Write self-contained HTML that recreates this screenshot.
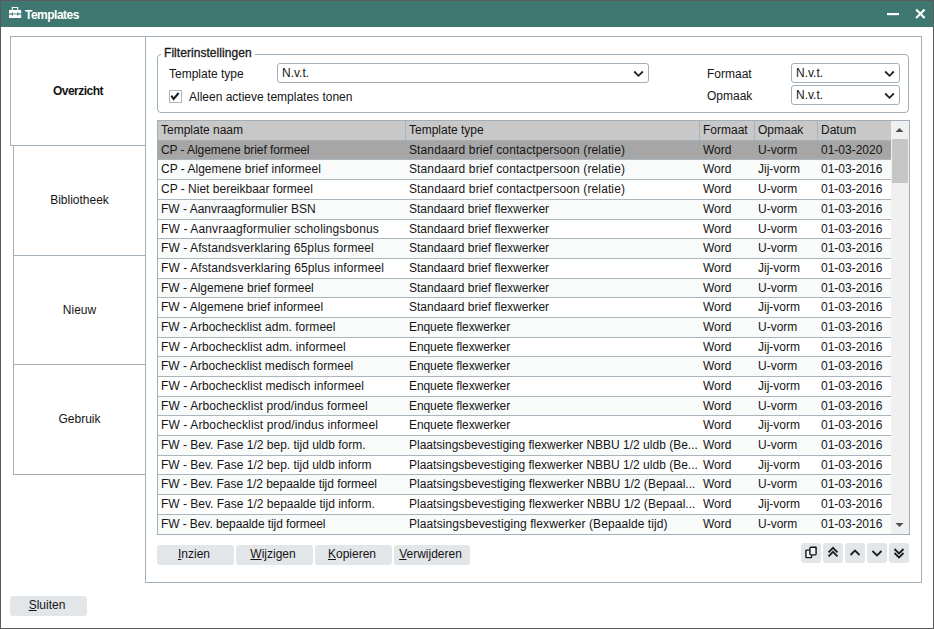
<!DOCTYPE html>
<html><head><meta charset="utf-8"><title>Templates</title>
<style>
*{box-sizing:border-box;margin:0;padding:0}
html,body{width:934px;height:629px;overflow:hidden;background:#fff}
body{position:relative;font-family:"Liberation Sans",sans-serif;font-size:12px;color:#151515}
.abs{position:absolute}
.win{position:absolute;left:0;top:0;width:934px;height:629px;border:1px solid #5a5a5a}
.title{position:absolute;left:1px;top:1px;width:932px;height:26px;background:#3e7670}
.ttext{position:absolute;left:25px;top:8px;line-height:14px;color:#fff;font-weight:bold;letter-spacing:-0.5px;font-size:12px}
.tab{position:absolute;border:1px solid #a3afb8;background:#fff;text-align:center;line-height:14px}
.panel{position:absolute;left:145px;top:36px;width:777px;height:547px;border:1px solid #a3afb8}
.fs{position:absolute;left:157px;top:54px;width:752px;height:59px;border:1px solid #a3afb8;border-radius:4px}
.legend{position:absolute;left:161px;top:46px;width:94px;height:14px;background:#fff;line-height:14px;padding-left:3px;-webkit-text-stroke:0.3px #1e1e1e;letter-spacing:0.05px}
.lbl{position:absolute;line-height:14px}
.sel-box{position:absolute;border:1px solid #a3afb8;border-radius:3px;background:#fff;line-height:19px;padding-left:4px}
.chev{position:absolute}
.cb{position:absolute;left:169px;top:90px;width:13px;height:13px;border:1px solid #b4b4b4;background:#fff}
.table{position:absolute;left:157px;top:120px;width:753px;height:415px;border:1px solid #a3afb8;overflow:hidden;background:#fff}
.hdr{position:absolute;left:0;top:0;width:733px;height:20px;background:#c8c8c8;border-bottom:1px solid #a3afb8}
.hdr span{position:absolute;top:0;line-height:19px;height:19px;padding-left:3px;border-left:1px solid #aab4bc}
.row{position:absolute;left:0;width:733px;border-bottom:1px solid #aab5bd;background:#fff}
.row.alt{background:#f9fbfb}
.row.sel{background:#a6a6a6}
.row span{position:absolute;top:0;line-height:19px;white-space:nowrap;overflow:hidden}
.c1{left:3px;width:244px}
.c2{left:251px;width:290px}
.c3{left:545px;width:52px}
.c4{left:600px;width:60px}
.c5{left:663px;width:70px}
.sb{position:absolute;left:733px;top:0;width:18px;height:413px;background:#f0f0f0}
.thumb{position:absolute;left:1px;top:18px;width:16px;height:44px;background:#c6c6c6}
.btn{position:absolute;height:20px;background:#e2e6e9;border-radius:3px;text-align:center;line-height:18px;padding-right:3px}
.ibtn{position:absolute;top:543px;width:20px;height:20px;background:#e2e6e9;border-radius:3px}
u{text-decoration:underline;text-decoration-thickness:1px;text-underline-offset:1px}
</style></head><body>
<div class="win"></div>
<div class="title">
  <svg class="abs" style="left:8px;top:6px" width="13" height="12" viewBox="0 0 13 12">
    <path d="M3.3 3.2 V0.5 H8.7 V3.2" fill="none" stroke="#fff" stroke-width="1.1"/>
    <rect x="0" y="3" width="12.2" height="3.2" fill="#fff"/>
    <rect x="0" y="6.2" width="12.2" height="1.8" fill="#fff" opacity="0.45"/>
    <rect x="0" y="8" width="12.2" height="3" fill="#fff"/>
    <path d="M4.2 6.6 Q6.1 7.6 8 6.6 V7.2 Q6.1 8 4.2 7.2 Z" fill="#fff"/>
    <ellipse cx="3.3" cy="6.9" rx="0.75" ry="1.7" fill="#3e7670"/>
    <ellipse cx="8.9" cy="6.9" rx="0.75" ry="1.7" fill="#3e7670"/>
  </svg>
</div>
<div class="ttext">Templates</div>
<svg class="abs" style="left:886px;top:12px" width="14" height="4"><rect x="1" y="1" width="12" height="2.2" fill="#fff"/></svg>
<svg class="abs" style="left:913px;top:7px" width="14" height="14" viewBox="0 0 14 14"><path d="M3.1 2.4 L11.6 10.9 M11.6 2.4 L3.1 10.9" stroke="#fff" stroke-width="2.1"/></svg>

<div class="panel"></div>
<div class="tab" style="left:13px;top:145px;width:133px;height:111px;padding-top:47px">Bibliotheek</div>
<div class="tab" style="left:13px;top:255px;width:133px;height:110px;padding-top:47px">Nieuw</div>
<div class="tab" style="left:13px;top:364px;width:133px;height:111px;padding-top:47px">Gebruik</div>
<div class="tab" style="left:10px;top:36px;width:136px;height:110px;padding-top:47px;font-weight:bold;letter-spacing:-0.5px">Overzicht</div>

<div class="fs"></div>
<div class="legend">Filterinstellingen</div>
<div class="lbl" style="left:169px;top:67px">Template type</div>
<div class="sel-box" style="left:277px;top:63px;width:372px;height:20px">N.v.t.</div>
<svg class="abs" style="left:633px;top:70px" width="11" height="8"><path d="M1.2 1.5 L5.5 5.8 L9.8 1.5" fill="none" stroke="#222" stroke-width="1.8"/></svg>
<div class="cb"></div>
<svg class="abs" style="left:170px;top:91px" width="11" height="11"><path d="M1.4 4.6 L3.6 8 L8.6 2" fill="none" stroke="#1e1e1e" stroke-width="2"/></svg>
<div class="lbl" style="left:189px;top:90px">Alleen actieve templates tonen</div>
<div class="lbl" style="left:707px;top:67px">Formaat</div>
<div class="lbl" style="left:707px;top:89px">Opmaak</div>
<div class="sel-box" style="left:791px;top:63px;width:109px;height:20px">N.v.t.</div>
<svg class="abs" style="left:884px;top:70px" width="11" height="8"><path d="M1.2 1.5 L5.5 5.8 L9.8 1.5" fill="none" stroke="#222" stroke-width="1.8"/></svg>
<div class="sel-box" style="left:791px;top:85px;width:109px;height:20px">N.v.t.</div>
<svg class="abs" style="left:884px;top:92px" width="11" height="8"><path d="M1.2 1.5 L5.5 5.8 L9.8 1.5" fill="none" stroke="#222" stroke-width="1.8"/></svg>

<div class="table">
  <div style="position:absolute;left:0;top:-121px;">
<div class="row sel" style="top:141px;height:19px"><span class="c1" style="letter-spacing:-0.077px">CP - Algemene brief formeel</span><span class="c2" style="letter-spacing:0.115px">Standaard brief contactpersoon (relatie)</span><span class="c3">Word</span><span class="c4">U-vorm</span><span class="c5">01-03-2020</span></div>
<div class="row alt" style="top:160px;height:20px"><span class="c1">CP - Algemene brief informeel</span><span class="c2" style="letter-spacing:0.115px">Standaard brief contactpersoon (relatie)</span><span class="c3">Word</span><span class="c4">Jij-vorm</span><span class="c5">01-03-2016</span></div>
<div class="row" style="top:180px;height:20px"><span class="c1">CP - Niet bereikbaar formeel</span><span class="c2" style="letter-spacing:0.115px">Standaard brief contactpersoon (relatie)</span><span class="c3">Word</span><span class="c4">U-vorm</span><span class="c5">01-03-2016</span></div>
<div class="row alt" style="top:200px;height:20px"><span class="c1">FW - Aanvraagformulier BSN</span><span class="c2">Standaard brief flexwerker</span><span class="c3">Word</span><span class="c4">U-vorm</span><span class="c5">01-03-2016</span></div>
<div class="row" style="top:220px;height:19px"><span class="c1" style="letter-spacing:0.139px">FW - Aanvraagformulier scholingsbonus</span><span class="c2">Standaard brief flexwerker</span><span class="c3">Word</span><span class="c4">U-vorm</span><span class="c5">01-03-2016</span></div>
<div class="row alt" style="top:239px;height:20px"><span class="c1" style="letter-spacing:0.089px">FW - Afstandsverklaring 65plus formeel</span><span class="c2">Standaard brief flexwerker</span><span class="c3">Word</span><span class="c4">U-vorm</span><span class="c5">01-03-2016</span></div>
<div class="row" style="top:259px;height:20px"><span class="c1" style="letter-spacing:0.105px">FW - Afstandsverklaring 65plus informeel</span><span class="c2">Standaard brief flexwerker</span><span class="c3">Word</span><span class="c4">Jij-vorm</span><span class="c5">01-03-2016</span></div>
<div class="row alt" style="top:279px;height:19px"><span class="c1">FW - Algemene brief formeel</span><span class="c2">Standaard brief flexwerker</span><span class="c3">Word</span><span class="c4">U-vorm</span><span class="c5">01-03-2016</span></div>
<div class="row" style="top:298px;height:20px"><span class="c1">FW - Algemene brief informeel</span><span class="c2">Standaard brief flexwerker</span><span class="c3">Word</span><span class="c4">Jij-vorm</span><span class="c5">01-03-2016</span></div>
<div class="row alt" style="top:318px;height:20px"><span class="c1" style="letter-spacing:0.037px">FW - Arbochecklist adm. formeel</span><span class="c2" style="letter-spacing:-0.094px">Enquete flexwerker</span><span class="c3">Word</span><span class="c4">U-vorm</span><span class="c5">01-03-2016</span></div>
<div class="row" style="top:338px;height:19px"><span class="c1" style="letter-spacing:0.062px">FW - Arbochecklist adm. informeel</span><span class="c2" style="letter-spacing:-0.094px">Enquete flexwerker</span><span class="c3">Word</span><span class="c4">Jij-vorm</span><span class="c5">01-03-2016</span></div>
<div class="row alt" style="top:357px;height:20px"><span class="c1" style="letter-spacing:0.027px">FW - Arbochecklist medisch formeel</span><span class="c2" style="letter-spacing:-0.094px">Enquete flexwerker</span><span class="c3">Word</span><span class="c4">U-vorm</span><span class="c5">01-03-2016</span></div>
<div class="row" style="top:377px;height:20px"><span class="c1" style="letter-spacing:0.060px">FW - Arbochecklist medisch informeel</span><span class="c2" style="letter-spacing:-0.094px">Enquete flexwerker</span><span class="c3">Word</span><span class="c4">Jij-vorm</span><span class="c5">01-03-2016</span></div>
<div class="row alt" style="top:397px;height:19px"><span class="c1" style="letter-spacing:0.108px">FW - Arbochecklist prod/indus formeel</span><span class="c2" style="letter-spacing:-0.094px">Enquete flexwerker</span><span class="c3">Word</span><span class="c4">U-vorm</span><span class="c5">01-03-2016</span></div>
<div class="row" style="top:416px;height:20px"><span class="c1" style="letter-spacing:0.126px">FW - Arbochecklist prod/indus informeel</span><span class="c2" style="letter-spacing:-0.094px">Enquete flexwerker</span><span class="c3">Word</span><span class="c4">Jij-vorm</span><span class="c5">01-03-2016</span></div>
<div class="row alt" style="top:436px;height:20px"><span class="c1">FW - Bev. Fase 1/2 bep. tijd uldb form.</span><span class="c2">Plaatsingsbevestiging flexwerker NBBU 1/2 uldb (Be...</span><span class="c3">Word</span><span class="c4">U-vorm</span><span class="c5">01-03-2016</span></div>
<div class="row" style="top:456px;height:19px"><span class="c1">FW - Bev. Fase 1/2 bep. tijd uldb inform</span><span class="c2">Plaatsingsbevestiging flexwerker NBBU 1/2 uldb (Be...</span><span class="c3">Word</span><span class="c4">Jij-vorm</span><span class="c5">01-03-2016</span></div>
<div class="row alt" style="top:475px;height:20px"><span class="c1" style="letter-spacing:-0.031px">FW - Bev. Fase 1/2 bepaalde tijd formeel</span><span class="c2" style="letter-spacing:0.018px">Plaatsingsbevestiging flexwerker NBBU 1/2 (Bepaal...</span><span class="c3">Word</span><span class="c4">U-vorm</span><span class="c5">01-03-2016</span></div>
<div class="row" style="top:495px;height:20px"><span class="c1">FW - Bev. Fase 1/2 bepaalde tijd inform.</span><span class="c2" style="letter-spacing:0.018px">Plaatsingsbevestiging flexwerker NBBU 1/2 (Bepaal...</span><span class="c3">Word</span><span class="c4">Jij-vorm</span><span class="c5">01-03-2016</span></div>
<div class="row alt" style="top:515px;height:20px"><span class="c1" style="letter-spacing:-0.090px">FW - Bev. bepaalde tijd formeel</span><span class="c2" style="letter-spacing:0.079px">Plaatsingsbevestiging flexwerker (Bepaalde tijd)</span><span class="c3">Word</span><span class="c4">U-vorm</span><span class="c5">01-03-2016</span></div>
  </div>
  <div class="hdr">
    <span style="left:0;width:247px;border-left:none;padding-left:3px">Template naam</span>
    <span style="left:247px;width:294px">Template type</span>
    <span style="left:541px;width:55px">Formaat</span>
    <span style="left:596px;width:63px">Opmaak</span>
    <span style="left:659px;width:74px">Datum</span>
  </div>
  <div class="sb">
    <svg class="abs" style="left:4px;top:6px" width="9" height="6"><path d="M0.5 5 L4.5 1 L8.5 5 Z" fill="#505050"/></svg>
    <div class="thumb"></div>
    <svg class="abs" style="left:4px;top:401px" width="9" height="6"><path d="M0.5 1 L4.5 5 L8.5 1 Z" fill="#505050"/></svg>
  </div>
</div>

<div class="btn" style="left:157px;top:545px;width:77px"><u>I</u>nzien</div>
<div class="btn" style="left:236px;top:545px;width:77px"><u>W</u>ijzigen</div>
<div class="btn" style="left:315px;top:545px;width:77px"><u>K</u>opieren</div>
<div class="btn" style="left:394px;top:545px;width:76px"><u>V</u>erwijderen</div>

<div class="ibtn" style="left:801px"><svg width="20" height="20"><path d="M8.6 7.1 H5.6 Q4.9 7.1 4.9 7.8 V13.9 Q4.9 14.6 5.6 14.6 H9.9 Q10.6 14.6 10.6 13.9 V12 H8.6 Z" fill="#f3f4f5"/><rect x="8.9" y="4.2" width="6.2" height="7.7" rx="1.2" fill="#f3f4f5" stroke="#151515" stroke-width="1.4"/><path d="M13.2 3.8 L15.7 3.8 L15.7 6.3 Z" fill="#151515"/><path d="M8.2 7.1 H5.6 Q4.9 7.1 4.9 7.8 V13.9 Q4.9 14.6 5.6 14.6 H9.9 Q10.6 14.6 10.6 13.9 V12.3" fill="none" stroke="#151515" stroke-width="1.4"/></svg></div>
<div class="ibtn" style="left:823px"><svg width="20" height="20"><path d="M5.5 9.3 L10 4.8 L14.5 9.3 M5.5 13.3 L10 8.8 L14.5 13.3" fill="none" stroke="#1e1e1e" stroke-width="1.8"/></svg></div>
<div class="ibtn" style="left:845px"><svg width="20" height="20"><path d="M5.5 12 L10 7.5 L14.5 12" fill="none" stroke="#1e1e1e" stroke-width="1.8"/></svg></div>
<div class="ibtn" style="left:867px"><svg width="20" height="20"><path d="M5.5 8 L10 12.5 L14.5 8" fill="none" stroke="#1e1e1e" stroke-width="1.8"/></svg></div>
<div class="ibtn" style="left:889px"><svg width="20" height="20"><path d="M5.5 6 L10 10.5 L14.5 6 M5.5 10 L10 14.5 L14.5 10" fill="none" stroke="#1e1e1e" stroke-width="1.8"/></svg></div>

<div class="btn" style="left:10px;top:596px;width:77px"><u>S</u>luiten</div>
</body></html>
